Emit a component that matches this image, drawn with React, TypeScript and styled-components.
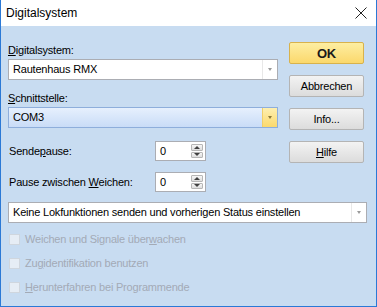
import React from 'react';
import styled, { createGlobalStyle } from 'styled-components';

const GlobalStyle = createGlobalStyle`
    html, body {
        margin: 0;
        padding: 0;
        background: #ffffff;
    }
    body {
        font-family: 'Liberation Sans', Arial, sans-serif;
        font-size: 11px;
        color: #000000;
    }
`;

const Window = styled.div`
    width: 377px;
    height: 307px;
    box-sizing: border-box;
    border: 1px solid #2b79d6;
    border-top: none;
    display: flex;
    flex-direction: column;
    background: #c8dcf1;
`;

const TitleBar = styled.div`
    height: 26px;
    flex: 0 0 26px;
    background: #ffffff;
    display: flex;
    align-items: center;
    justify-content: space-between;
    padding: 0 9px 0 5px;
    font-size: 12px;
`;

const Body = styled.div`
    flex: 1;
    padding: 16px 9px 0 7px;
    display: flex;
    flex-direction: column;
    letter-spacing: -0.2px;
`;

const Top = styled.div`
    display: grid;
    grid-template-columns: 270px 75px;
    column-gap: 11px;
`;

const Fields = styled.div`
    display: flex;
    flex-direction: column;
`;

const Buttons = styled.div`
    display: flex;
    flex-direction: column;
    gap: 11px;
`;

const Label = styled.div<{ $top?: number }>`
    height: 16px;
    line-height: 16px;
    margin: ${(p) => p.$top ?? 0}px 0 1px 0;
    white-space: nowrap;
`;

const Combo = styled.div<{ $active?: boolean; $top?: number }>`
    height: 21px;
    box-sizing: border-box;
    margin-top: ${(p) => p.$top ?? 0}px;
    border: 1px solid ${(p) => (p.$active ? '#8eaedb' : '#abadb3')};
    background: ${(p) =>
        p.$active ? 'linear-gradient(#e6f0fd, #c9dcf7)' : '#ffffff'};
    display: flex;
    align-items: stretch;
`;

const ComboText = styled.div`
    flex: 1;
    padding-left: 4px;
    line-height: 19px;
    white-space: nowrap;
    overflow: hidden;
`;

const ComboArrow = styled.div<{ $active?: boolean }>`
    width: 15px;
    box-sizing: border-box;
    border-left: 1px solid ${(p) => (p.$active ? '#f0cf6a' : '#e8e8e8')};
    background: ${(p) => (p.$active ? 'linear-gradient(#fdefb0, #fbd96d)' : '#ffffff')};
    display: flex;
    align-items: center;
    justify-content: center;

    &::after {
        content: '';
        border-left: 2.5px solid transparent;
        border-right: 2.5px solid transparent;
        border-top: 3px solid ${(p) => (p.$active ? '#8c7a3a' : '#9a9a9a')};
    }
`;

const SpinRow = styled.div<{ $top: number }>`
    display: grid;
    grid-template-columns: 146px 51px;
    align-items: center;
    margin-top: ${(p) => p.$top}px;
    padding-left: 1px;
`;

const SpinBox = styled.div`
    height: 20px;
    box-sizing: border-box;
    border: 1px solid #abadb3;
    background: #ffffff;
    display: flex;
    align-items: stretch;
`;

const SpinValue = styled.div`
    flex: 1;
    padding-left: 4px;
    line-height: 18px;
`;

const SpinArrows = styled.div`
    width: 12px;
    display: flex;
    flex-direction: column;
    justify-content: center;
    gap: 1px;
    padding: 2px 2px 2px 0;
`;

const SpinBtn = styled.div<{ $down?: boolean }>`
    flex: 1;
    border: 1px solid #b6b6b6;
    border-radius: 1px;
    background: linear-gradient(#f6f6f6, #dedede);
    display: flex;
    align-items: center;
    justify-content: center;

    &::after {
        content: '';
        border-left: 3px solid transparent;
        border-right: 3px solid transparent;
        ${(p) =>
            p.$down ? 'border-top: 3px solid #404040;' : 'border-bottom: 3px solid #404040;'}
    }
`;

const Button = styled.div<{ $primary?: boolean }>`
    height: 22px;
    box-sizing: border-box;
    border: 1px solid ${(p) => (p.$primary ? '#d8b24c' : '#b4b4b4')};
    border-radius: 2px;
    background: ${(p) =>
        p.$primary ? 'linear-gradient(#fdeea2, #fbd86c)' : 'linear-gradient(#f3f3f3, #dcdcdc)'};
    display: flex;
    align-items: center;
    justify-content: center;
    font-size: ${(p) => (p.$primary ? '13px' : '11px')};
    font-weight: ${(p) => (p.$primary ? 'bold' : 'normal')};
    color: ${(p) => (p.$primary ? '#1a1a1a' : '#000000')};
`;

const Checks = styled.div`
    display: flex;
    flex-direction: column;
    margin-top: 4px;
    padding-left: 1px;
`;

const Check = styled.div`
    height: 24px;
    display: flex;
    align-items: center;
    gap: 5px;
    color: #a3aab6;
    white-space: nowrap;
`;

const CheckBox = styled.span`
    width: 11px;
    height: 11px;
    box-sizing: border-box;
    border: 1px solid #cfd6de;
    background: #e6edf5;
`;

const U = styled.span`
    text-decoration: underline;
`;

const CloseIcon = () => (
    <svg width="12" height="12" viewBox="0 0 12 12">
        <path d="M0.5 0.5 L11.5 11.5 M11.5 0.5 L0.5 11.5" stroke="#222" strokeWidth="1" fill="none" />
    </svg>
);

const Spin = ({ value }: { value: string }) => (
    <SpinBox>
        <SpinValue>{value}</SpinValue>
        <SpinArrows>
            <SpinBtn />
            <SpinBtn $down />
        </SpinArrows>
    </SpinBox>
);

export default function App() {
    return (
        <>
            <GlobalStyle />
            <Window>
                <TitleBar>
                    <span>Digitalsystem</span>
                    <CloseIcon />
                </TitleBar>
                <Body>
                    <Top>
                        <Fields>
                            <Label>
                                <U>D</U>igitalsystem:
                            </Label>
                            <Combo>
                                <ComboText>Rautenhaus RMX</ComboText>
                                <ComboArrow />
                            </Combo>
                            <Label $top={10}>
                                <U>S</U>chnittstelle:
                            </Label>
                            <Combo $active>
                                <ComboText>COM3</ComboText>
                                <ComboArrow $active />
                            </Combo>
                            <SpinRow $top={13}>
                                <span>
                                    Sende<U>p</U>ause:
                                </span>
                                <Spin value="0" />
                            </SpinRow>
                            <SpinRow $top={11}>
                                <span>
                                    Pause zwischen <U>W</U>eichen:
                                </span>
                                <Spin value="0" />
                            </SpinRow>
                        </Fields>
                        <Buttons>
                            <Button $primary>OK</Button>
                            <Button>Abbrechen</Button>
                            <Button>Info...</Button>
                            <Button>
                                <U>H</U>ilfe
                            </Button>
                        </Buttons>
                    </Top>
                    <Combo $top={10}>
                        <ComboText>Keine Lokfunktionen senden und vorherigen Status einstellen</ComboText>
                        <ComboArrow />
                    </Combo>
                    <Checks>
                        <Check>
                            <CheckBox />
                            <span>
                                Weichen und Signale über<U>w</U>achen
                            </span>
                        </Check>
                        <Check>
                            <CheckBox />
                            <span>
                                Zu<U>g</U>identifikation benutzen
                            </span>
                        </Check>
                        <Check>
                            <CheckBox />
                            <span>
                                <U>H</U>erunterfahren bei Programmende
                            </span>
                        </Check>
                    </Checks>
                </Body>
            </Window>
        </>
    );
}
